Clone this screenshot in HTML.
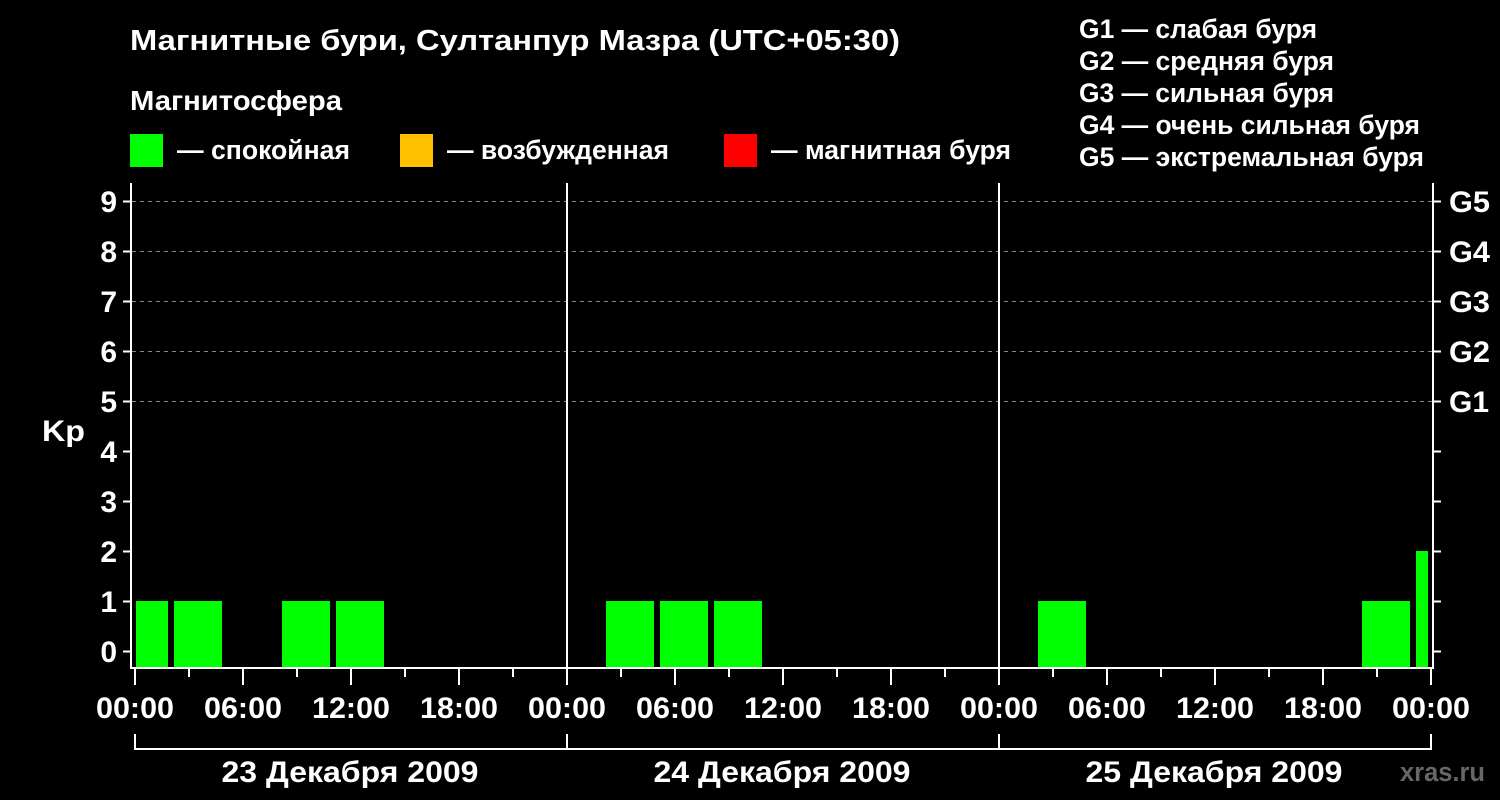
<!DOCTYPE html>
<html><head><meta charset="utf-8"><style>
body{margin:0;background:#000;}
svg{display:block}
text{font-family:"Liberation Sans",Arial,sans-serif;font-weight:bold;fill:#fff}
</style></head><body>
<svg width="1500" height="800" viewBox="0 0 1500 800">
<rect width="1500" height="800" fill="#000"/>
<text x="130" y="50" font-size="29" textLength="770" lengthAdjust="spacingAndGlyphs">Магнитные бури, Султанпур Мазра (UTC+05:30)</text>
<text x="130" y="110" font-size="28" textLength="212" lengthAdjust="spacingAndGlyphs">Магнитосфера</text>
<rect x="130" y="134" width="33" height="33" fill="#00ff00"/>
<text x="177" y="159" font-size="27" textLength="173" lengthAdjust="spacingAndGlyphs">— спокойная</text>
<rect x="400" y="134" width="33" height="33" fill="#ffc000"/>
<text x="447" y="159" font-size="27" textLength="222" lengthAdjust="spacingAndGlyphs">— возбужденная</text>
<rect x="724" y="134" width="33" height="33" fill="#ff0000"/>
<text x="771" y="159" font-size="27" textLength="240" lengthAdjust="spacingAndGlyphs">— магнитная буря</text>
<g font-size="27">
<text x="1079" y="38" textLength="238" lengthAdjust="spacingAndGlyphs">G1 — слабая буря</text>
<text x="1079" y="70" textLength="255" lengthAdjust="spacingAndGlyphs">G2 — средняя буря</text>
<text x="1079" y="102" textLength="255" lengthAdjust="spacingAndGlyphs">G3 — сильная буря</text>
<text x="1079" y="134" textLength="341" lengthAdjust="spacingAndGlyphs">G4 — очень сильная буря</text>
<text x="1079" y="166" textLength="345" lengthAdjust="spacingAndGlyphs">G5 — экстремальная буря</text>
</g>
<g stroke="#888" stroke-width="1" stroke-dasharray="4,4">
<line x1="132" y1="201.5" x2="1432" y2="201.5"/>
<line x1="132" y1="251.5" x2="1432" y2="251.5"/>
<line x1="132" y1="301.5" x2="1432" y2="301.5"/>
<line x1="132" y1="351.5" x2="1432" y2="351.5"/>
<line x1="132" y1="401.5" x2="1432" y2="401.5"/>
</g>
<g fill="#00ff00">
<rect x="136" y="601" width="32" height="67"/>
<rect x="174" y="601" width="48" height="67"/>
<rect x="282" y="601" width="48" height="67"/>
<rect x="336" y="601" width="48" height="67"/>
<rect x="606" y="601" width="48" height="67"/>
<rect x="660" y="601" width="48" height="67"/>
<rect x="714" y="601" width="48" height="67"/>
<rect x="1038" y="601" width="48" height="67"/>
<rect x="1362" y="601" width="48" height="67"/>
<rect x="1416" y="551" width="12" height="117"/>
</g>
<g stroke="#fff" stroke-width="2" fill="none">
<polyline points="131,183 131,668 1433,668 1433,183"/>
<line x1="567" y1="183" x2="567" y2="668"/>
<line x1="999" y1="183" x2="999" y2="668"/>
<path d="M123 201.5h8M123 251.5h8M123 301.5h8M123 351.5h8M123 401.5h8M123 451.5h8M123 501.5h8M123 551.5h8M123 601.5h8M123 651.5h8"/>
<path d="M1433 201.5h8M1433 251.5h8M1433 301.5h8M1433 351.5h8M1433 401.5h8M1433 451.5h8M1433 501.5h8M1433 551.5h8M1433 601.5h8M1433 651.5h8"/>
<path d="M135 668v17M243 668v17M351 668v17M459 668v17M567 668v17M675 668v17M783 668v17M891 668v17M999 668v17M1107 668v17M1215 668v17M1323 668v17M1431 668v17"/>
<path d="M189 668v9M297 668v9M405 668v9M513 668v9M621 668v9M729 668v9M837 668v9M945 668v9M1053 668v9M1161 668v9M1269 668v9M1377 668v9"/>
<path d="M135 734v16M567 734v16M999 734v16M1431 734v16M135 749h1296"/>
</g>
<g font-size="30" text-anchor="end">
<text x="117" y="212">9</text><text x="117" y="262">8</text><text x="117" y="312">7</text><text x="117" y="362">6</text><text x="117" y="412">5</text><text x="117" y="462">4</text><text x="117" y="512">3</text><text x="117" y="562">2</text><text x="117" y="612">1</text><text x="117" y="662">0</text>
</g>
<text x="42" y="441" font-size="30" textLength="43" lengthAdjust="spacingAndGlyphs">Kp</text>
<g font-size="30">
<text x="1449" y="212" textLength="41" lengthAdjust="spacingAndGlyphs">G5</text><text x="1449" y="262" textLength="41" lengthAdjust="spacingAndGlyphs">G4</text><text x="1449" y="312" textLength="41" lengthAdjust="spacingAndGlyphs">G3</text><text x="1449" y="362" textLength="41" lengthAdjust="spacingAndGlyphs">G2</text><text x="1449" y="412" textLength="40" lengthAdjust="spacingAndGlyphs">G1</text>
</g>
<g font-size="30" text-anchor="middle">
<text x="135" y="718" textLength="78" lengthAdjust="spacingAndGlyphs">00:00</text><text x="243" y="718" textLength="78" lengthAdjust="spacingAndGlyphs">06:00</text><text x="351" y="718" textLength="78" lengthAdjust="spacingAndGlyphs">12:00</text><text x="459" y="718" textLength="78" lengthAdjust="spacingAndGlyphs">18:00</text>
<text x="567" y="718" textLength="78" lengthAdjust="spacingAndGlyphs">00:00</text><text x="675" y="718" textLength="78" lengthAdjust="spacingAndGlyphs">06:00</text><text x="783" y="718" textLength="78" lengthAdjust="spacingAndGlyphs">12:00</text><text x="891" y="718" textLength="78" lengthAdjust="spacingAndGlyphs">18:00</text>
<text x="999" y="718" textLength="78" lengthAdjust="spacingAndGlyphs">00:00</text><text x="1107" y="718" textLength="78" lengthAdjust="spacingAndGlyphs">06:00</text><text x="1215" y="718" textLength="78" lengthAdjust="spacingAndGlyphs">12:00</text><text x="1323" y="718" textLength="78" lengthAdjust="spacingAndGlyphs">18:00</text>
<text x="1431" y="718" textLength="78" lengthAdjust="spacingAndGlyphs">00:00</text>
<text x="350" y="782" textLength="257" lengthAdjust="spacingAndGlyphs">23 Декабря 2009</text>
<text x="782" y="782" textLength="257" lengthAdjust="spacingAndGlyphs">24 Декабря 2009</text>
<text x="1214" y="782" textLength="257" lengthAdjust="spacingAndGlyphs">25 Декабря 2009</text>
</g>
<text x="1400" y="781" font-size="27" textLength="85" lengthAdjust="spacingAndGlyphs" style="fill:#666">xras.ru</text>
</svg>
</body></html>
